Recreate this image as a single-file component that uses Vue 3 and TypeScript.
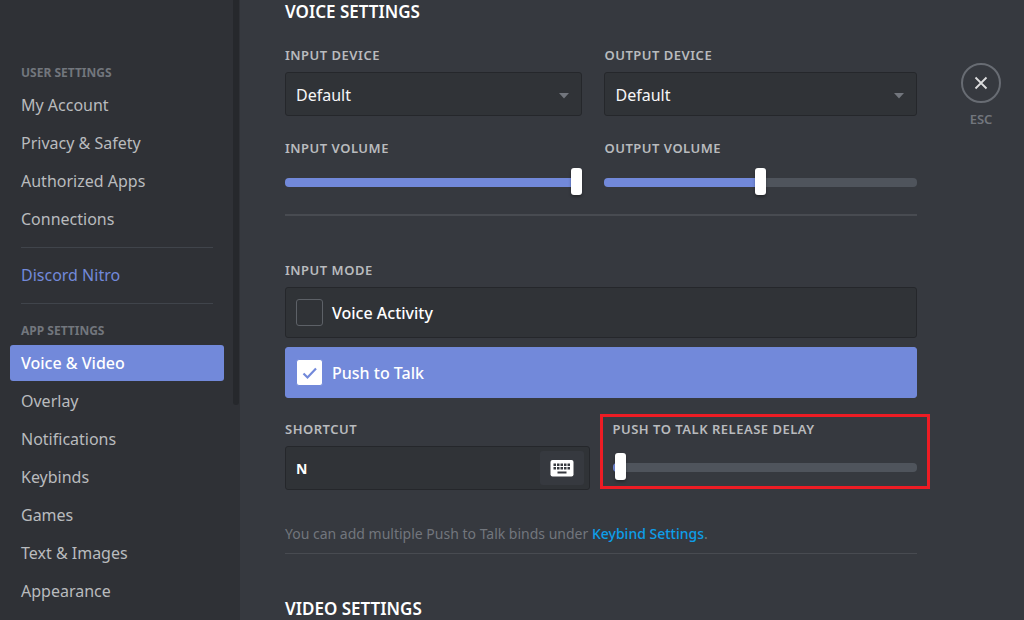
<script setup lang="ts">
import { ref } from 'vue'

interface NavItem {
  label: string
  kind?: 'active' | 'nitro'
}
interface NavGroup {
  title?: string
  items: NavItem[]
}

const groups: NavGroup[] = [
  {
    title: 'User Settings',
    items: [
      { label: 'My Account' },
      { label: 'Privacy & Safety' },
      { label: 'Authorized Apps' },
      { label: 'Connections' },
    ],
  },
  { items: [{ label: 'Discord Nitro', kind: 'nitro' }] },
  {
    title: 'App Settings',
    items: [
      { label: 'Voice & Video', kind: 'active' },
      { label: 'Overlay' },
      { label: 'Notifications' },
      { label: 'Keybinds' },
      { label: 'Games' },
      { label: 'Text & Images' },
      { label: 'Appearance' },
    ],
  },
]

const modes = [
  { value: 'voice', label: 'Voice Activity' },
  { value: 'ptt', label: 'Push to Talk' },
]

const inputVolume = ref(100)
const outputVolume = ref(50)
const releaseDelay = ref(1)
const mode = ref('ptt')
const shortcut = ref('N')
</script>

<template>
  <div class="app">
    <aside class="sidebar">
      <nav class="nav" aria-label="Settings">
        <section v-for="(group, i) in groups" :key="i" class="group">
          <h2 v-if="group.title" class="group-title">{{ group.title }}</h2>
          <a
            v-for="item in group.items"
            :key="item.label"
            href="#"
            class="nav-item"
            :class="item.kind"
          >{{ item.label }}</a>
        </section>
      </nav>
      <div class="scroll-thumb"></div>
    </aside>

    <main class="main">
      <div class="content">
        <h1 class="heading">Voice Settings</h1>

        <div class="devices">
          <div class="field">
            <label class="label" for="input-device">Input Device</label>
            <div class="select-wrap">
              <select id="input-device" class="box select"><option>Default</option></select>
              <svg class="caret" viewBox="0 0 10 6" aria-hidden="true"><path d="M0 0h10L5 5.5z" fill="#72767d" /></svg>
            </div>
          </div>
          <div class="field">
            <label class="label" for="output-device">Output Device</label>
            <div class="select-wrap">
              <select id="output-device" class="box select"><option>Default</option></select>
              <svg class="caret" viewBox="0 0 10 6" aria-hidden="true"><path d="M0 0h10L5 5.5z" fill="#72767d" /></svg>
            </div>
          </div>
          <div class="field">
            <label class="label" for="input-volume">Input Volume</label>
            <input id="input-volume" v-model="inputVolume" class="slider" type="range" min="0" max="100" :style="{ '--fill': inputVolume + '%' }" />
          </div>
          <div class="field">
            <label class="label" for="output-volume">Output Volume</label>
            <input id="output-volume" v-model="outputVolume" class="slider" type="range" min="0" max="100" :style="{ '--fill': outputVolume + '%' }" />
          </div>
        </div>

        <hr class="rule thick" />

        <fieldset class="modes">
          <legend class="label">Input Mode</legend>
          <label
            v-for="m in modes"
            :key="m.value"
            class="mode"
            :class="{ on: mode === m.value }"
          >
            <input v-model="mode" type="radio" name="mode" class="mode-input" :value="m.value" />
            <span class="tick">
              <svg v-if="mode === m.value" viewBox="0 0 18 18" aria-hidden="true">
                <path d="M2.500 9.500 6.500 13.500 15 4.500" fill="none" stroke="#7289da" stroke-width="2.200" />
              </svg>
            </span>
            <span>{{ m.label }}</span>
          </label>
        </fieldset>

        <div class="shortcuts">
          <div class="field">
            <label class="label" for="shortcut">Shortcut</label>
            <div class="box recorder">
              <input id="shortcut" v-model="shortcut" class="key" type="text" readonly />
              <button class="record" type="button" aria-label="Record keybind">
                <svg viewBox="0 0 24 18" aria-hidden="true">
                  <rect x="0.500" y="1" width="23" height="16.500" rx="2" fill="#fff" />
                  <g fill="#36393f">
                    <template v-for="r in 2" :key="r">
                      <rect v-for="c in 5" :key="c" :x="c * 3.500" :y="r * 3.500 + 1" width="2.500" height="2.500" />
                    </template>
                    <rect x="7.500" y="12.500" width="9" height="2" />
                  </g>
                </svg>
              </button>
            </div>
          </div>
          <div class="field highlighted">
            <label class="label" for="release-delay">Push to Talk Release Delay</label>
            <input id="release-delay" v-model="releaseDelay" class="slider" type="range" min="0" max="100" :style="{ '--fill': releaseDelay + '%' }" />
          </div>
        </div>

        <p class="note">You can add multiple Push to Talk binds under <a href="#">Keybind Settings</a>.</p>
        <hr class="rule" />

        <h1 class="heading">Video Settings</h1>
      </div>

      <div class="closer">
        <button class="close" type="button" aria-label="Close settings">
          <svg viewBox="0 0 14 14" aria-hidden="true"><path d="M1.500 1.500l11 11M12.500 1.500l-11 11" stroke="#dcddde" stroke-width="1.800" fill="none" /></svg>
        </button>
        <span class="esc">ESC</span>
      </div>
    </main>
  </div>
</template>

<style>
body {
  margin: 0;
  background: #36393f;
}
</style>

<style scoped>
.app {
  display: flex;
  min-height: 100vh;
  font-family: "Noto Sans", "Open Sans", sans-serif;
  font-size: 16px;
  color: #fff;
  background: #36393f;
}
.app *,
.app *::before,
.app *::after {
  box-sizing: border-box;
}
.sidebar {
  position: relative;
  flex: 0 0 240px;
  padding: 63px 16px 8px 10px;
  background: #2f3136;
}
.scroll-thumb {
  position: absolute;
  top: 0;
  right: 1px;
  width: 6px;
  height: 405px;
  border-radius: 0 0 3px 3px;
  background: #26282c;
}
.nav {
  display: flex;
  flex-direction: column;
}
.group {
  display: flex;
  flex-direction: column;
  gap: 2px;
}
.group + .group::before {
  content: "";
  height: 1px;
  margin: 10px 11px 7px;
  background: #40444b;
}
.group-title {
  margin: 0 11px 2px;
  font-size: 12px;
  line-height: 20px;
  font-weight: 700;
  text-transform: uppercase;
  color: #72767d;
}
.group + .group .group-title {
  margin-top: 8px;
}
.nav-item {
  padding: 0 11px;
  border-radius: 3px;
  line-height: 36px;
  color: #b9bbbe;
  text-decoration: none;
}
.nav-item.nitro {
  color: #7289da;
}
.nav-item.active {
  color: #fff;
  background: #7289da;
  font-weight: 500;
}
.main {
  display: flex;
  flex: 1;
  gap: 44px;
  min-width: 0;
  padding: 0 23px 0 45px;
}
.content {
  flex: 1;
  min-width: 0;
  padding-top: 2px;
}
.heading {
  margin: 0;
  font-size: 17px;
  line-height: 20px;
  font-weight: 600;
  text-transform: uppercase;
}
.devices {
  display: grid;
  grid-template-columns: 297fr 312fr;
  gap: 24px 22px;
  margin-top: 25px;
}
.field {
  position: relative;
  display: flex;
  flex-direction: column;
  min-width: 0;
}
.label {
  display: block;
  padding: 0;
  margin-bottom: 9px;
  font-size: 13px;
  line-height: 16px;
  font-weight: 600;
  letter-spacing: 0.5px;
  text-transform: uppercase;
  color: #b9bbbe;
}
.box {
  width: 100%;
  height: 44px;
  border: 1px solid #25272b;
  border-radius: 3px;
  background: #303337;
}
.select-wrap {
  position: relative;
}
.select {
  display: block;
  appearance: none;
  padding: 2px 11px 0 10px;
  font: inherit;
  color: #f6f6f7;
}
.caret {
  position: absolute;
  top: 21px;
  right: 13px;
  width: 10px;
  height: 6px;
}
.slider {
  appearance: none;
  width: 100%;
  height: 27px;
  margin: 0;
  background: none;
}
.slider::-webkit-slider-runnable-track {
  height: 9px;
  border-radius: 4px;
  background: linear-gradient(#7289da, #7289da) 0 0 / var(--fill) 100% no-repeat #4f545c;
}
.slider::-webkit-slider-thumb {
  appearance: none;
  width: 11px;
  height: 27px;
  margin-top: -10px;
  border-radius: 3px;
  background: #fff;
  box-shadow: 0 2px 3px rgba(0, 0, 0, 0.3);
}
.devices .slider {
  margin-top: 4px;
}
.rule {
  height: 1px;
  margin: 0;
  border: 0;
  background: #484b51;
}
.rule.thick {
  height: 2px;
  margin: 18px 0 46px;
}
.modes {
  display: flex;
  flex-direction: column;
  gap: 9px;
  margin: 0;
  padding: 0;
  border: 0;
}
.mode {
  position: relative;
  display: flex;
  align-items: center;
  gap: 9px;
  height: 51px;
  padding: 0 10px;
  border: 1px solid #25272b;
  border-radius: 3px;
  background: #303337;
  font-weight: 500;
}
.mode.on {
  border-color: #7289da;
  background: #7289da;
}
.mode-input {
  position: absolute;
  opacity: 0;
}
.tick {
  display: flex;
  align-items: center;
  justify-content: center;
  width: 27px;
  height: 27px;
  border: 1px solid #5d6167;
  border-radius: 3px;
}
.on .tick {
  border-color: #7289da;
  background: #fff;
}
.tick svg {
  width: 18px;
  height: 18px;
}
.shortcuts {
  display: grid;
  grid-template-columns: 1fr 1fr;
  gap: 23px;
  margin-top: 23px;
}
.recorder {
  display: flex;
  align-items: center;
  padding: 0 5px 0 10px;
}
.key {
  flex: 1;
  min-width: 0;
  padding: 0;
  border: 0;
  outline: 0;
  background: none;
  font: inherit;
  font-size: 14px;
  font-weight: 700;
  color: #fff;
}
.record {
  display: flex;
  align-items: center;
  justify-content: center;
  width: 44px;
  height: 34px;
  padding: 0;
  border: 0;
  border-radius: 3px;
  background: #36393f;
}
.record svg {
  width: 24px;
  height: 18px;
}
.highlighted .slider {
  margin-top: 8px;
}
.highlighted::after {
  content: "";
  position: absolute;
  inset: -7px -13px 1px;
  border: 3px solid #ed1c24;
  pointer-events: none;
}
.note {
  margin: 34px 0 9px;
  font-size: 14px;
  line-height: 20px;
  color: #72767d;
}
.note a {
  color: #0d9ee8;
  font-weight: 500;
  text-decoration: none;
}
.rule + .heading {
  margin-top: 45px;
}
.closer {
  display: flex;
  flex: 0 0 40px;
  flex-direction: column;
  align-items: center;
  gap: 8px;
  padding-top: 63px;
}
.close {
  display: flex;
  align-items: center;
  justify-content: center;
  width: 40px;
  height: 40px;
  padding: 0;
  border: 2px solid #686c73;
  border-radius: 50%;
  background: none;
}
.close svg {
  width: 14px;
  height: 14px;
}
.esc {
  font-size: 13px;
  line-height: 16px;
  font-weight: 600;
  color: #72767d;
}
</style>
